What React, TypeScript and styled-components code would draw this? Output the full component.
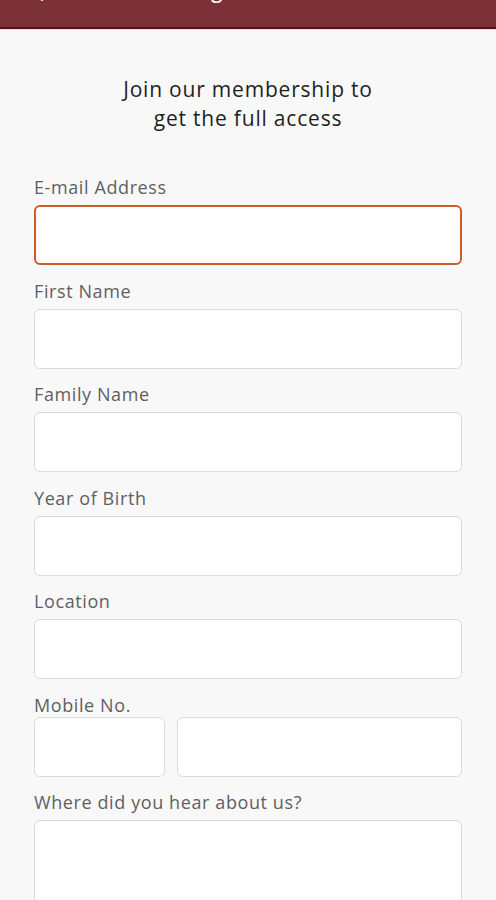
import React from 'react';
import styled, { createGlobalStyle } from 'styled-components';

const GlobalStyle = createGlobalStyle`
  html, body {
    margin: 0;
    padding: 0;
    background: #f8f8f8;
    font-family: 'Open Sans', 'Liberation Sans', sans-serif;
  }
  * {
    box-sizing: border-box;
  }
`;

const Page = styled.div`
  width: 496px;
  height: 900px;
  overflow: hidden;
  background: #f8f8f8;
`;

const Header = styled.header`
  height: 29px;
  display: flex;
  align-items: flex-start;
  overflow: hidden;
  background: #7b3137;
  border-bottom: 2px solid #5c0e12;
  box-shadow: 0 1px 0 #ecd9d9;
  color: #ffffff;
`;

const BackIcon = styled.svg`
  flex: none;
  width: 24px;
  height: 24px;
  margin: -18px 0 0 27px;
`;

const HeaderTitle = styled.span`
  flex: 1;
  margin: -23px 51px 0 0;
  text-align: center;
  font-size: 20px;
  line-height: 28px;
  font-weight: 600;
  letter-spacing: 0.6px;
`;

const Content = styled.form`
  padding: 0 34px;
`;

const Intro = styled.h1`
  margin: 46px 0 42px;
  text-align: center;
  font-size: 21px;
  line-height: 29px;
  font-weight: 500;
  letter-spacing: 0.8px;
  color: #1f1f1f;
`;

const Field = styled.div`
  margin-bottom: 13.5px;
`;

const Label = styled.label<{ $tight?: boolean }>`
  display: block;
  margin-bottom: ${(p) => (p.$tight ? '0' : '6px')};
  font-size: 18px;
  line-height: 24px;
  letter-spacing: 0.6px;
  color: #606060;
`;

const Input = styled.input<{ $focused?: boolean }>`
  display: block;
  width: 100%;
  height: 60px;
  padding: 0 14px;
  background: #ffffff;
  border: ${(p) => (p.$focused ? '2px solid #cf5c24' : '1px solid #dcdcdc')};
  border-radius: 6px;
  font: inherit;
  font-size: 17px;
  outline: none;
`;

const PhoneRow = styled.div`
  display: grid;
  grid-template-columns: 131px 1fr;
  gap: 12px;
`;

const TextArea = styled.textarea`
  display: block;
  width: 100%;
  height: 120px;
  padding: 12px 14px;
  background: #ffffff;
  border: 1px solid #dcdcdc;
  border-radius: 6px;
  font: inherit;
  resize: none;
  outline: none;
`;

const fields = ['First Name', 'Family Name', 'Year of Birth', 'Location'];

export default function App() {
  return (
    <Page>
      <GlobalStyle />
      <Header>
        <BackIcon viewBox="0 0 24 24" fill="none" stroke="#f3dede" strokeWidth="2.4" strokeLinecap="round" strokeLinejoin="round">
          <path d="m15 18-6-6 6-6" />
        </BackIcon>
        <HeaderTitle>Registration</HeaderTitle>
      </Header>
      <Content>
        <Intro>
          Join our membership to
          <br />
          get the full access
        </Intro>
        <Field>
          <Label>E-mail Address</Label>
          <Input $focused type="email" />
        </Field>
        {fields.map((name) => (
          <Field key={name}>
            <Label>{name}</Label>
            <Input type="text" />
          </Field>
        ))}
        <Field>
          <Label $tight>Mobile No.</Label>
          <PhoneRow>
            <Input type="tel" />
            <Input type="tel" />
          </PhoneRow>
        </Field>
        <Field>
          <Label>Where did you hear about us?</Label>
          <TextArea />
        </Field>
      </Content>
    </Page>
  );
}
